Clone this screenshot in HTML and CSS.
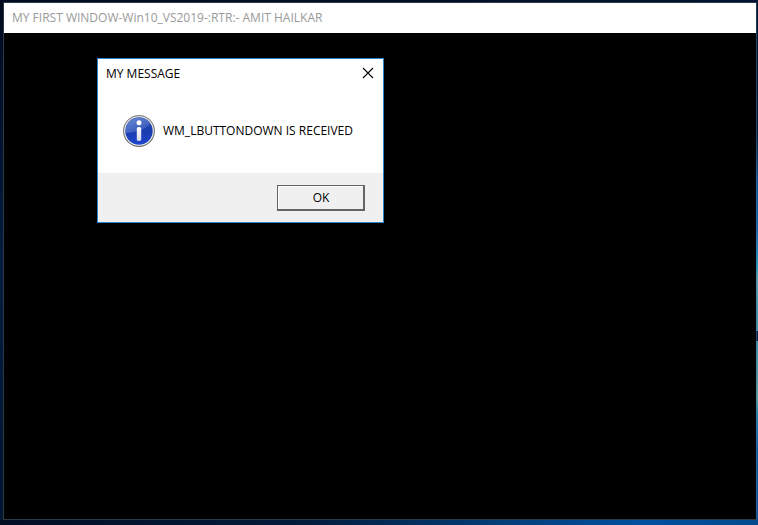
FILE: index.html
```html
<!DOCTYPE html>
<html lang="en">
<head>
<meta charset="utf-8">
<title>MY FIRST WINDOW</title>
<link rel="stylesheet" href="styles.css">
</head>
<body>
<main class="window">
  <header class="titlebar">MY FIRST WINDOW-Win10_VS2019-:RTR:- AMIT HAILKAR</header>
  <section class="client">
    <div class="dialog" role="dialog" aria-labelledby="dialog-title" aria-describedby="dialog-text">
      <div class="dialog-head">
        <h1 class="dialog-title" id="dialog-title">MY MESSAGE</h1>
        <button class="close" type="button" aria-label="Close">
          <svg width="12" height="12" viewBox="0 0 12 12" aria-hidden="true"><path d="M1 1 11 11M11 1 1 11" fill="none" stroke="#000" stroke-width="1.1"/></svg>
        </button>
      </div>
      <div class="dialog-body">
        <svg class="info" width="32" height="32" viewBox="0 0 32 32" aria-hidden="true">
          <defs>
            <linearGradient id="blue" x1="0" y1="0" x2="0" y2="1">
              <stop offset="0" stop-color="#2c50ae"/>
              <stop offset=".5" stop-color="#1b3cae"/>
              <stop offset="1" stop-color="#1d45cc"/>
            </linearGradient>
            <linearGradient id="gloss" x1="0" y1="0" x2="1" y2="1">
              <stop offset="0" stop-color="#8aa8e4" stop-opacity=".7"/>
              <stop offset="1" stop-color="#6486d8" stop-opacity=".25"/>
            </linearGradient>
            <linearGradient id="rim" x1="0" y1="0" x2="0" y2="1">
              <stop offset="0" stop-color="#858585"/>
              <stop offset="1" stop-color="#6c6c6c"/>
            </linearGradient>
            <linearGradient id="stem" x1="0" y1="0" x2="0" y2="1">
              <stop offset="0" stop-color="#fff"/>
              <stop offset="1" stop-color="#d3d9e8"/>
            </linearGradient>
          </defs>
          <circle cx="16" cy="16" r="15.4" fill="#eee" stroke="url(#rim)" stroke-width="1.1"/>
          <circle cx="16" cy="16" r="13.7" fill="url(#blue)"/>
          <path d="M2.8 18A13.4 13.4 0 0 1 27.2 8.5C22 14.5 13 18 2.8 18Z" fill="url(#gloss)"/>
          <circle cx="16" cy="7.8" r="2.5" fill="#fff"/>
          <rect x="13.8" y="12" width="4.4" height="14" rx="1.8" fill="url(#stem)"/>
        </svg>
        <p class="message" id="dialog-text">WM_LBUTTONDOWN IS RECEIVED</p>
      </div>
      <div class="dialog-foot">
        <button class="ok" type="button">OK</button>
      </div>
    </div>
  </section>
</main>
</body>
</html>
```
FILE: styles.css
```css
* {
  box-sizing: border-box;
}

body {
  margin: 0;
  min-height: 100vh;
  display: flex;
  padding: 2px 1px 5px 3px;
  font: 12px/16px "Open Sans", "Noto Sans", sans-serif;
  background:
    linear-gradient(to right, #020d22, #021b3a 40%, #03407c 68%, #0050a0 85%, #034a8c) bottom / 100% 5px no-repeat,
    linear-gradient(to bottom, #021326 0, #0a2238 26%, #0a5090 34%, #1268a8 44%, #2a9fc4 51%, #5aa8b0 53%, #4096a8 63%, #02203c 63%, #02203c 65%, #4096a8 65%, #5aa89a 76%, #1b86b0 79%, #0a5aa0 86%, #0a4c92) right / 2px 100% no-repeat,
    linear-gradient(to right, #010a1e, #021530) top / 100% 2px no-repeat,
    linear-gradient(to bottom, #010a1e, #041c3e 50%, #031530);
}

.window {
  flex: 1;
  display: flex;
  flex-direction: column;
  border: 1px solid #2c3a48;
  border-right-color: rgba(50, 110, 160, 0.5);
}

.titlebar {
  height: 30px;
  padding: 0 8px;
  line-height: 30px;
  color: #999;
  background: #fff;
}

.client {
  flex: 1;
  position: relative;
  background: #000;
}

.dialog {
  position: absolute;
  top: 25px;
  left: 93px;
  display: flex;
  flex-direction: column;
  width: 287px;
  border: 1px solid #2b83c6;
  background: #fff;
  color: #000;
}

.dialog-head {
  display: flex;
  align-items: center;
  justify-content: space-between;
  height: 30px;
  padding: 0 8px;
}

.dialog-title {
  margin: 0;
  font: inherit;
}

.close {
  display: flex;
  padding: 0 1px 2px;
  border: 0;
  background: none;
}

.dialog-body {
  display: flex;
  align-items: center;
  gap: 8px;
  height: 84px;
  padding: 0 25px;
}

.info {
  flex: none;
}

.message {
  margin: 0;
  white-space: nowrap;
}

.dialog-foot {
  display: flex;
  align-items: center;
  justify-content: flex-end;
  height: 49px;
  padding: 0 18px;
  background: #f0f0f0;
}

.ok {
  width: 88px;
  height: 26px;
  padding: 2px 0 0 1px;
  border: 1px solid #646464;
  border-right-width: 2px;
  border-bottom-width: 2px;
  background: #f0f0f0;
  box-shadow: inset 1px 1px #fff;
  color: #000;
  font: inherit;
}
```
